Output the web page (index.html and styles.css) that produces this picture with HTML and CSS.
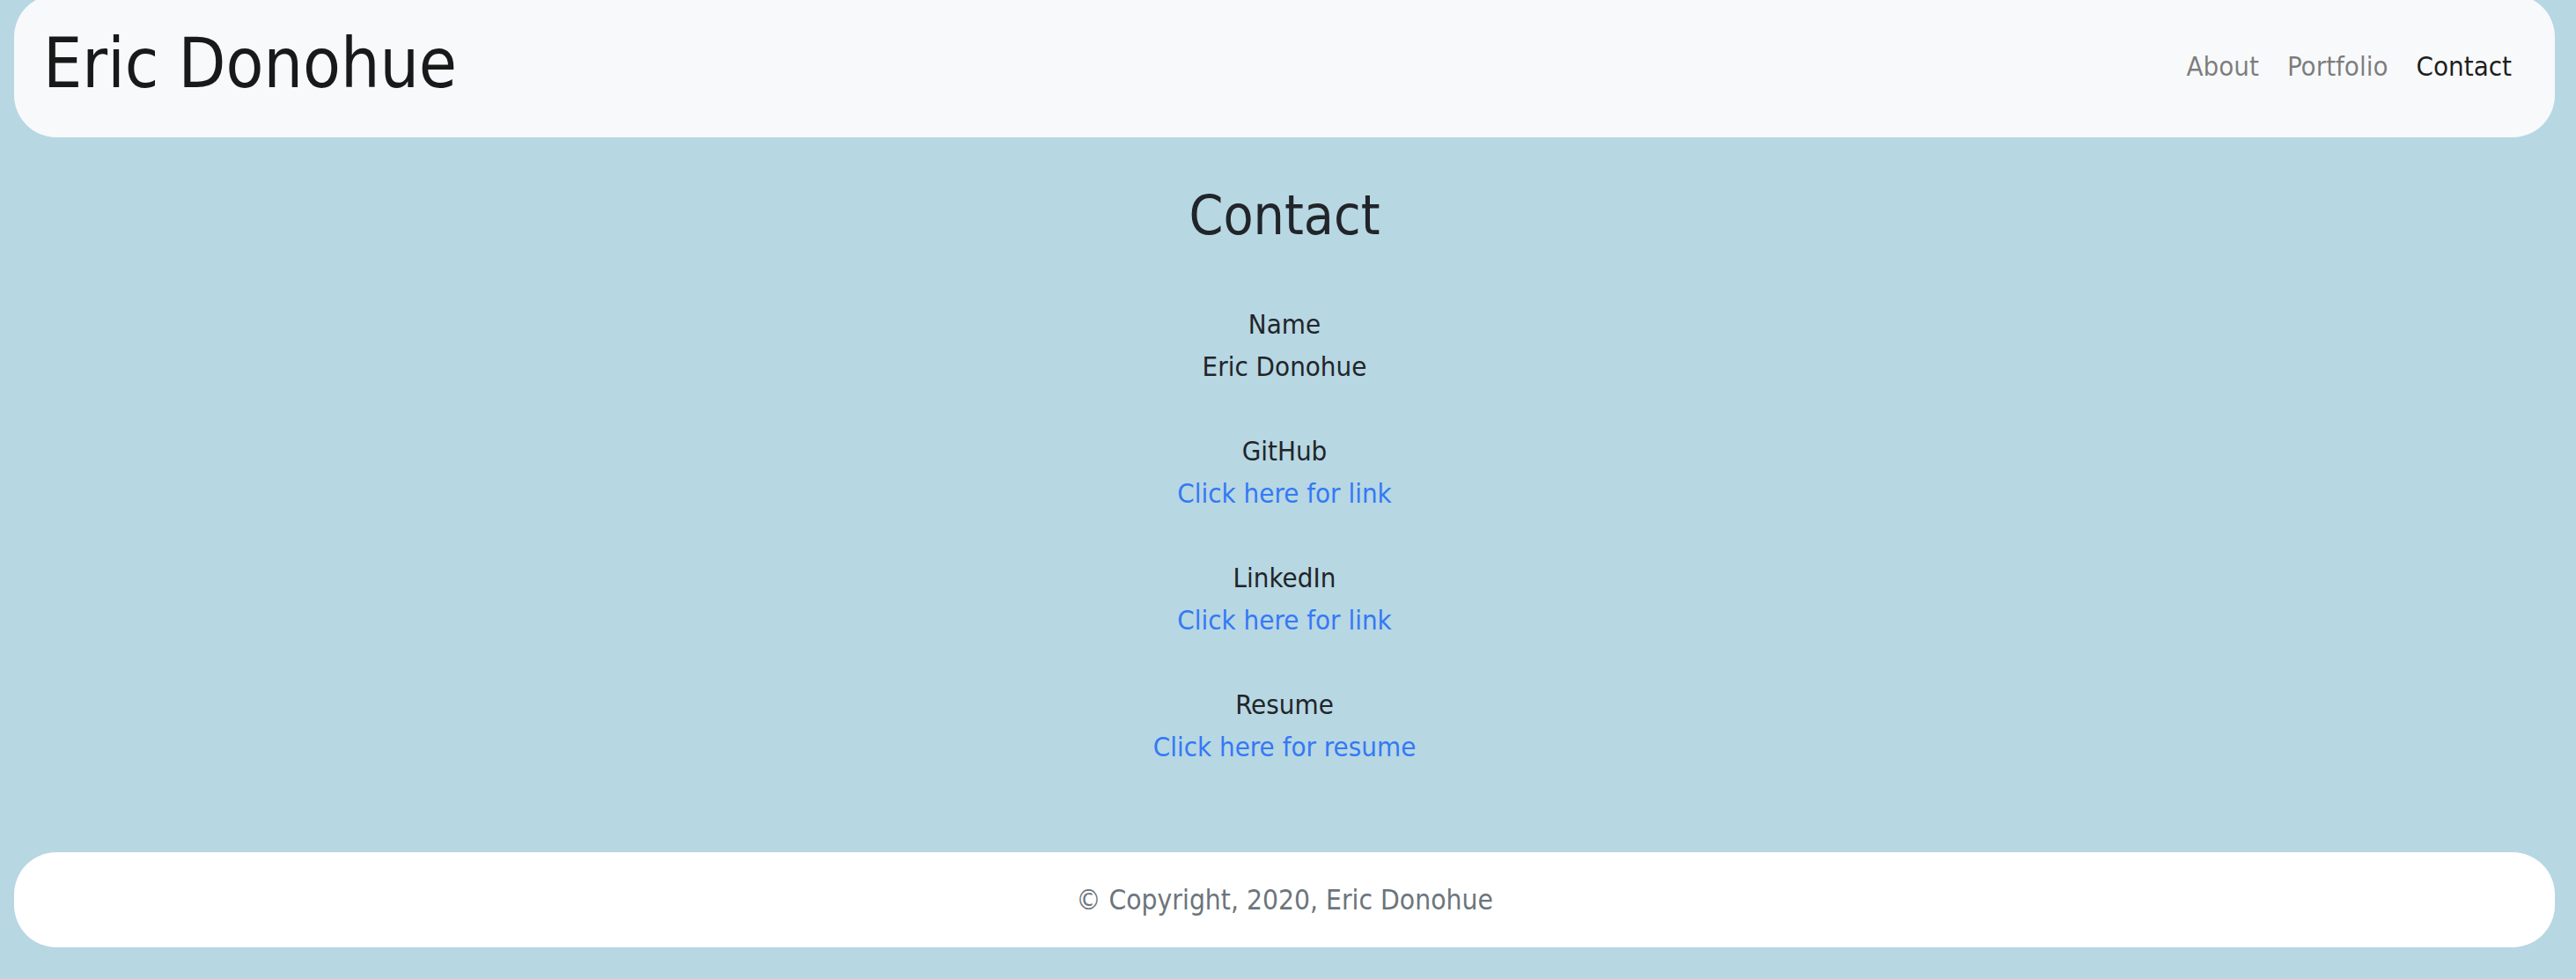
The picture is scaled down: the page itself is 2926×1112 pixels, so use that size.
FILE: index.html
```html
<!DOCTYPE html>
<html lang="en">
<head>
<meta charset="utf-8">
<title>Contact - Eric Donohue</title>
<link rel="stylesheet" href="styles.css">
</head>
<body>
  <header class="navbar">
    <a class="brand" href="#">Eric Donohue</a>
    <nav class="nav">
      <a class="nav-link" href="#">About</a>
      <a class="nav-link" href="#">Portfolio</a>
      <a class="nav-link active" href="#">Contact</a>
    </nav>
  </header>

  <main class="contact">
    <h2 class="title">Contact</h2>
    <div class="item">
      <div class="label">Name</div>
      <div class="value">Eric Donohue</div>
    </div>
    <div class="item">
      <div class="label">GitHub</div>
      <a class="link" href="#">Click here for link</a>
    </div>
    <div class="item">
      <div class="label">LinkedIn</div>
      <a class="link" href="#">Click here for link</a>
    </div>
    <div class="item">
      <div class="label">Resume</div>
      <a class="link" href="#">Click here for resume</a>
    </div>
  </main>

  <footer class="footer">
    <span class="copy">© Copyright, 2020, Eric Donohue</span>
  </footer>
</body>
</html>
```

FILE: styles.css
```css
* { box-sizing: border-box; }

html, body { margin: 0; }

body {
  background: #b7d7e3;
  font-family: "DejaVu Sans Condensed", "DejaVu Sans", Verdana, sans-serif;
  font-size: 31px;
  line-height: 48px;
  color: #212529;
  padding: 0 24px 36px 16px;
}

.navbar {
  margin-top: -6px;
  height: 162px;
  background: #f8f9fa;
  border-radius: 48px;
  display: flex;
  align-items: center;
  justify-content: space-between;
  padding: 0 49px 0 33px;
}

.brand {
  font-size: 78px;
  line-height: 78px;
  color: rgba(0, 0, 0, 0.9);
  text-decoration: none;
  margin-top: -7px;
}

.nav {
  display: flex;
  gap: 32px;
}

.nav-link {
  color: rgba(0, 0, 0, 0.5);
  text-decoration: none;
}

.nav-link.active {
  color: rgba(0, 0, 0, 0.9);
}

.contact {
  display: flex;
  flex-direction: column;
  align-items: center;
  text-align: center;
  padding-top: 52px;
  gap: 48px;
}

.title {
  font-size: 62px;
  font-weight: normal;
  line-height: 74px;
  margin: 0 0 14px;
}

.item {
  display: flex;
  flex-direction: column;
  align-items: center;
}

.link {
  color: #3479f5;
  text-decoration: none;
}

.footer {
  margin-top: 96px;
  height: 108px;
  background: #ffffff;
  border-radius: 48px;
  display: flex;
  align-items: center;
  justify-content: center;
}

.copy {
  color: #6c757d;
  font-size: 31.5px;
}
```
